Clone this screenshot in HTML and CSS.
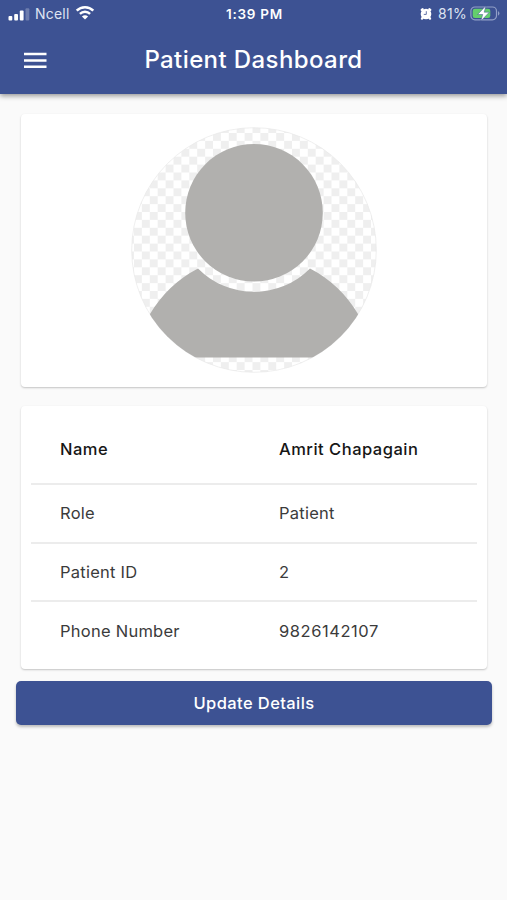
FILE: index.html
```
<!DOCTYPE html>
<html lang="en">
<head>
    <meta charset="UTF-8">
    <meta name="viewport" content="width=device-width, initial-scale=1.0">
    <title>Patient Dashboard</title>
    <link rel="stylesheet" href="styles.css">
</head>
<body>
    <header class="header">
        <div class="status-bar">
            <div class="status-left">
                <svg class="signal" width="22" height="14" viewBox="0 0 22 14" fill="#fff">
                    <rect x="0.5" y="9" width="3.8" height="4.4" rx="1"/>
                    <rect x="6.2" y="7" width="3.8" height="6.4" rx="1"/>
                    <rect x="11.8" y="3.6" width="3.8" height="9.8" rx="1"/>
                    <rect x="17.5" y="1.2" width="3.8" height="12.2" rx="1" opacity="0.25"/>
                </svg>
                <span class="carrier">Ncell</span>
                <svg class="wifi" width="20" height="15" viewBox="0 0 20 15">
                    <path d="M1.7 5.6C6.3 1 13.7 1 18.3 5.6" fill="none" stroke="#fff" stroke-width="2.5"/>
                    <path d="M4.9 8.9C7.8 6 12.2 6 15.1 8.9" fill="none" stroke="#fff" stroke-width="2.4"/>
                    <path d="M10 14.6L6.9 11.5C8.6 9.8 11.4 9.8 13.1 11.5Z" fill="#fff"/>
                </svg>
            </div>
            <span class="time">1:39 PM</span>
            <div class="status-right">
                <svg class="alarm" width="14" height="14" viewBox="0 0 14 14">
                    <path d="M2.8 3L3.6 2.3M11.2 3L10.4 2.3M3.6 10.8L3 11.6M10.4 10.8L11 11.6" stroke="#fff" stroke-width="2.4" stroke-linecap="round"/>
                    <circle cx="7" cy="7" r="5.3" fill="#fff"/>
                    <path d="M7.3 4.2V7.4H4.8" fill="none" stroke="#3d5293" stroke-width="0.8"/>
                </svg>
                <span class="percent">81%</span>
                <svg class="battery" width="31" height="17" viewBox="0 0 31 17">
                    <rect x="0.9" y="2" width="25.6" height="12.8" rx="4" fill="none" stroke="#919fc7" stroke-width="1.2"/>
                    <path d="M28 6Q31 8.4 28 10.8Z" fill="#919fc7"/>
                    <rect x="2.7" y="3.8" width="17.6" height="9.2" rx="2.2" fill="#64cf6c"/>
                    <path d="M15.9 0.8L7.6 9.5H12.7L10.9 16L19.3 7.2H14.2Z" fill="#fff" stroke="#3d5293" stroke-width="0.5"/>
                </svg>
            </div>
        </div>
        <div class="app-bar">
            <button class="menu" aria-label="Menu"><svg width="23" height="16" viewBox="0 0 23 16"><path d="M0 2H22.5M0 8.5H22.5M0 14.7H22.5" stroke="#fff" stroke-width="2.5"/></svg></button>
            <h1>Patient Dashboard</h1>
        </div>
    </header>

    <main>
        <section class="card photo">
            <svg width="246" height="246" viewBox="0 0 246 246">
                <defs>
                    <pattern id="checks" x="3" y="6" width="15.8" height="15.8" patternUnits="userSpaceOnUse">
                        <rect width="15.8" height="15.8" fill="#fff"/>
                        <rect width="7.9" height="7.9" fill="#efefef"/>
                        <rect x="7.9" y="7.9" width="7.9" height="7.9" fill="#efefef"/>
                    </pattern>
                    <clipPath id="round"><circle cx="123" cy="123" r="122.5"/></clipPath>
                </defs>
                <circle cx="123" cy="123" r="122.3" fill="url(#checks)" stroke="#e8e8e8" stroke-width="0.7"/>
                <g clip-path="url(#round)" fill="#b1b0ae">
                    <circle cx="123" cy="85.8" r="68.8"/>
                    <path d="M67 141.5A79 79 0 0 0 179 141.5Q209 157 227 187V230.5H19V187Q37 157 67 141.5Z"/>
                </g>
            </svg>
        </section>

        <section class="card details">
            <div class="row head"><span>Name</span><span>Amrit Chapagain</span></div>
            <div class="row"><span>Role</span><span>Patient</span></div>
            <div class="row"><span>Patient ID</span><span>2</span></div>
            <div class="row"><span>Phone Number</span><span class="phone">9826142107</span></div>
        </section>

        <button class="update">Update Details</button>
    </main>
</body>
</html>
```
FILE: styles.css
```
* {
    box-sizing: border-box;
}
body {
    margin: 0;
    min-height: 900px;
    background: #fafafa;
    font-family: Inter, "Liberation Sans", sans-serif;
}
.header {
    height: 94px;
    background: #3d5293;
    color: #fff;
    box-shadow: 0 2px 5px rgba(0, 0, 0, 0.4);
}
.status-bar {
    display: grid;
    grid-template-columns: 1fr auto 1fr;
    align-items: center;
    height: 27px;
    padding: 0 6px 0 8px;
    font-size: 14px;
}
.status-left,
.status-right {
    display: flex;
    align-items: center;
}
.status-right {
    justify-content: flex-end;
}
.signal {
    margin-right: 5px;
}
.carrier {
    color: #dfe4f2;
    letter-spacing: 0.2px;
}
.wifi {
    margin-left: 5px;
    margin-top: -2px;
}
.time {
    font-size: 13.5px;
    font-weight: 600;
    letter-spacing: 0.75px;
}
.alarm {
    margin-right: 5px;
}
.percent {
    color: #dfe4f2;
    letter-spacing: 0.3px;
    margin-right: 3px;
}
.app-bar {
    display: grid;
    grid-template-columns: 47px 1fr 47px;
    align-items: center;
    height: 65px;
}
.menu {
    display: flex;
    margin-left: 24px;
    padding: 0;
    border: 0;
    background: none;
}
h1 {
    margin: 0;
    font-size: 24px;
    font-weight: 500;
    letter-spacing: 0.4px;
    text-align: center;
}
main {
    display: flex;
    flex-direction: column;
    padding: 20px 15px 0;
}
.card {
    margin: 0 5px 0 6px;
    background: #fff;
    border-radius: 4px;
    box-shadow: 0 1px 2px rgba(0, 0, 0, 0.22);
}
.photo {
    height: 273px;
    padding-top: 13px;
    text-align: center;
}
.details {
    height: 263px;
    margin-top: 19px;
    padding: 8px 10px 0;
}
.row {
    display: grid;
    grid-template-columns: 219px 1fr;
    align-items: center;
    height: 58.5px;
    padding-left: 29px;
    border-bottom: 2px solid #ececec;
    color: #3b3b3b;
    font-size: 16.5px;
    letter-spacing: 0.25px;
}
.row.head {
    height: 71px;
    color: #161616;
    font-weight: 500;
    letter-spacing: 0.5px;
}
.row:last-child {
    border-bottom: 0;
}
.phone {
    letter-spacing: 0.55px;
}
.update {
    height: 44px;
    margin: 12px 0 0 1px;
    padding: 0;
    border: 0;
    border-radius: 5px;
    background: #3d5293;
    color: #fff;
    font: 500 16.5px Inter, "Liberation Sans", sans-serif;
    letter-spacing: 0.4px;
    box-shadow: 0 2px 3px rgba(0, 0, 0, 0.25);
}
```
